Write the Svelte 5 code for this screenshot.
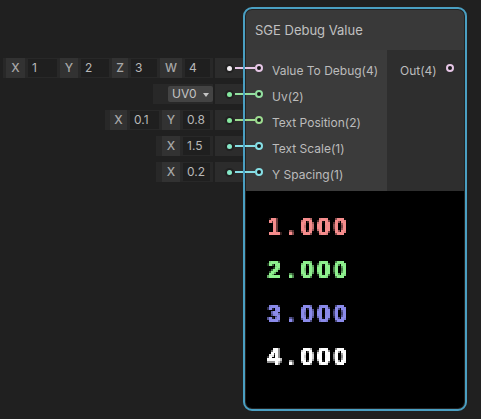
<script lang="ts">
	const inputs = [
		{ label: "Value To Debug(4)", color: "#e6c6e6" },
		{ label: "Uv(2)", color: "#93e0a0" },
		{ label: "Text Position(2)", color: "#9ddc90" },
		{ label: "Text Scale(1)", color: "#86dfe6" },
		{ label: "Y Spacing(1)", color: "#86dfe6" },
	];

	// each field is [axis, value, axis width, value width]
	const controls = [
		{ pad: 3, dot: "#f2eef2", fields: [["X", "1", 19, 29], ["Y", "2", 18, 28], ["Z", "3", 16, 26], ["W", "4", 22, 25]] },
		{ pad: 15, dot: "#86e8a0", dropdown: "UV0" },
		{ pad: 5, dot: "#86e8a0", fields: [["X", "0.1", 17, 29], ["Y", "0.8", 18, 27]] },
		{ pad: 6, dot: "#86e8c8", fields: [["X", "1.5", 18, 27]] },
		{ pad: 6, dot: "#86e8c8", fields: [["X", "0.2", 18, 27]] },
	];

	const lines = [
		{ text: "1.000", color: "#f58c8c" },
		{ text: "2.000", color: "#8ef08e" },
		{ text: "3.000", color: "#8a8aea" },
		{ text: "4.000", color: "#ffffff" },
	];
</script>

<div class="canvas">
	<svg class="defs" width="0" height="0" aria-hidden="true">
		<!-- blocky look for the preview digits, the text stays real text -->
		<filter id="pixel" x="0" y="0" width="100%" height="100%">
			<feFlood x="0" y="0" width="1" height="1" flood-color="#000" />
			<feComposite width="2" height="2" />
			<feTile result="grid" />
			<feComposite in="SourceGraphic" in2="grid" operator="in" />
			<feMorphology operator="dilate" radius="1" />
		</filter>
	</svg>

	<div class="controls">
		{#each controls as c, i}
			<div class="control-row">
				<div class="control" style="padding-left: {c.pad}px">
					{#if c.dropdown}
						<div class="dropdown">{c.dropdown}<span class="caret"></span></div>
					{:else}
						{#each c.fields as f}
							<span class="axis" style="width: {f[2]}px">{f[0]}</span>
							<span class="value" style="width: {f[3]}px">{f[1]}</span>
						{/each}
					{/if}
				</div>
				<div class="dot-box"><span class="dot" style="background: {c.dot}"></span></div>
				<span class="wire" style="background: {inputs[i].color}"></span>
			</div>
		{/each}
	</div>

	<div class="node">
		<div class="title">SGE Debug Value</div>
		<div class="ports">
			<div class="in-col">
				{#each inputs as p}
					<div class="port">
						<span class="pin in-pin" style="color: {p.color}"></span>
						<span>{p.label}</span>
					</div>
				{/each}
			</div>
			<div class="out-col">
				<div class="port out">
					<span>Out(4)</span>
					<span class="pin"></span>
				</div>
			</div>
		</div>
		<div class="preview">
			{#each lines as l}
				<div class="digits" style="color: {l.color}">
					{#each l.text as ch}<span class="cell">{ch}</span>{/each}
				</div>
			{/each}
		</div>
	</div>
</div>

<style>
	:global(body) {
		margin: 0;
		background: #202020;
	}
	.canvas {
		width: 481px;
		height: 419px;
		display: flex;
		align-items: flex-start;
		font-family: Inter, "Liberation Sans", sans-serif;
		font-size: 12px;
		color: #c4c4c4;
		overflow: hidden;
		background: #202020;
	}
	.defs {
		position: absolute;
	}
	.controls {
		width: 243px;
		margin-top: 57px;
		display: flex;
		flex-direction: column;
		align-items: flex-end;
		gap: 4px;
		flex: none;
	}
	.control-row {
		height: 22px;
		display: flex;
		align-items: center;
		gap: 2px;
		position: relative;
	}
	.control {
		height: 20px;
		display: flex;
		align-items: center;
		gap: 3px;
		background: #282828;
		padding-right: 3px;
	}
	.axis {
		height: 20px;
		line-height: 20px;
		text-align: center;
		background: #323232;
		color: #a8a8a8;
		font-weight: 500;
	}
	.value {
		height: 18px;
		line-height: 18px;
		padding-left: 4px;
		box-sizing: border-box;
		background: #1f1f1f;
		color: #b8b8b8;
	}
	.dropdown {
		width: 45px;
		height: 16px;
		line-height: 16px;
		background: #434343;
		padding-left: 4px;
		box-sizing: border-box;
		margin-right: -3px;
		font-size: 12px;
		white-space: nowrap;
		border-radius: 2px;
	}
	.caret {
		display: inline-block;
		margin-left: 6px;
		vertical-align: 1px;
		border-left: 3.5px solid transparent;
		border-right: 3.5px solid transparent;
		border-top: 4px solid #c4c4c4;
	}
	.dot-box {
		width: 28px;
		height: 20px;
		background: #2c2c2c;
		display: flex;
		align-items: center;
		justify-content: center;
	}
	.dot {
		width: 5px;
		height: 5px;
		border-radius: 50%;
		box-shadow: 0 0 0 2px rgba(0, 0, 0, 0.25);
	}
	.wire {
		position: absolute;
		right: 0;
		width: 8px;
		height: 2px;
	}
	.node {
		width: 224px;
		height: 404px;
		margin-top: 7px;
		box-sizing: border-box;
		border: 2px solid #4a9fc2;
		border-radius: 9px;
		padding: 1px;
		background: #222;
		display: flex;
		flex-direction: column;
		flex: none;
	}
	.title {
		height: 40px;
		line-height: 40px;
		padding-left: 9px;
		flex: none;
		background: #393939;
		color: #c0c0c0;
		font-size: 13px;
		border-radius: 6px 6px 0 0;
	}
	.ports {
		height: 141px;
		flex: none;
		display: flex;
	}
	.in-col {
		width: 141px;
		padding-top: 8px;
		box-sizing: border-box;
		background: #3b3b3b;
		display: flex;
		flex-direction: column;
		gap: 2px;
	}
	.out-col {
		flex: 1;
		padding-top: 8px;
		background: #2e2e2e;
	}
	.port {
		height: 24px;
		display: flex;
		align-items: center;
		gap: 9px;
		padding-left: 9px;
		color: #bcbcbc;
	}
	.out {
		padding-left: 13px;
	}
	.pin {
		width: 8px;
		height: 8px;
		margin-top: -4px;
		box-sizing: border-box;
		border-radius: 50%;
		border: 2px solid currentColor;
		background: #1a1a1a;
		flex: none;
		position: relative;
		color: #e6c6e6;
	}
	.in-pin::before {
		content: "";
		position: absolute;
		left: -12px;
		top: 1px;
		width: 10px;
		height: 2px;
		background: currentColor;
	}
	.preview {
		flex: 1;
		padding: 14px 0 0 20px;
		background: #000;
		border-radius: 0 0 6px 6px;
	}
	.digits {
		width: 84px;
		height: 43.3px;
		display: flex;
		font-family: "Liberation Sans", sans-serif;
		font-weight: 700;
		font-size: 24px;
		line-height: 43.3px;
		filter: url(#pixel);
	}
	.cell {
		width: 16.5px;
		flex: none;
		text-align: center;
	}
</style>
